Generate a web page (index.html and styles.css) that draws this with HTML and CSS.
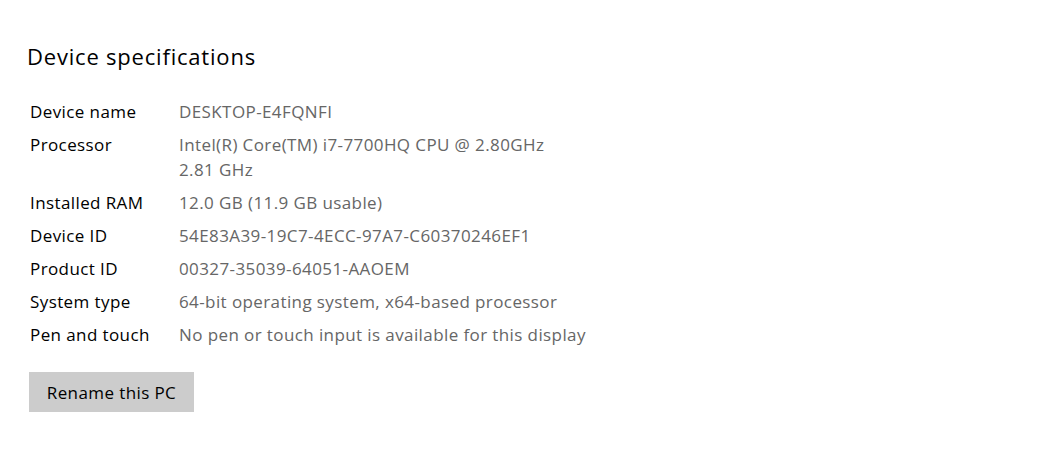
FILE: index.html
```html
<!DOCTYPE html>
<html lang="en">
<head>
    <meta charset="UTF-8">
    <title>About</title>
    <link rel="stylesheet" href="styles.css">
</head>
<body>
    <div class="container">
        <h2 class="title">Device specifications</h2>

        <div class="specs">
            <div class="label">Device name</div>
            <div class="value">DESKTOP-E4FQNFI</div>

            <div class="label">Processor</div>
            <div class="value">Intel(R) Core(TM) i7-7700HQ CPU @ 2.80GHz<br>2.81 GHz</div>

            <div class="label">Installed RAM</div>
            <div class="value">12.0 GB (11.9 GB usable)</div>

            <div class="label">Device ID</div>
            <div class="value">54E83A39-19C7-4ECC-97A7-C60370246EF1</div>

            <div class="label">Product ID</div>
            <div class="value">00327-35039-64051-AAOEM</div>

            <div class="label">System type</div>
            <div class="value">64-bit operating system, x64-based processor</div>

            <div class="label">Pen and touch</div>
            <div class="value">No pen or touch input is available for this display</div>
        </div>

        <button class="rename-btn">Rename this PC</button>
    </div>
</body>
</html>
```
FILE: styles.css
```css
* {
    margin: 0;
    padding: 0;
    box-sizing: border-box;
    font-family: "Open Sans", "Noto Sans", sans-serif;
}

body {
    background-color: #ffffff;
    color: #000000;
}

.container {
    padding: 38px 0 0 30px;
}

.title {
    font-size: 22px;
    font-weight: 400;
    letter-spacing: 0.8px;
    line-height: 36px;
    margin-left: -3px;
    margin-bottom: 25px;
}

.specs {
    display: grid;
    grid-template-columns: 149px auto;
    row-gap: 8px;
    font-size: 17px;
    letter-spacing: 0.4px;
    line-height: 25px;
    margin-bottom: 25px;
}

.value {
    color: #666666;
}

.rename-btn {
    width: 165px;
    height: 40px;
    border: none;
    background-color: #cccccc;
    color: #000000;
    font-size: 17px;
    letter-spacing: 0.4px;
    margin-left: -1px;
}
```
